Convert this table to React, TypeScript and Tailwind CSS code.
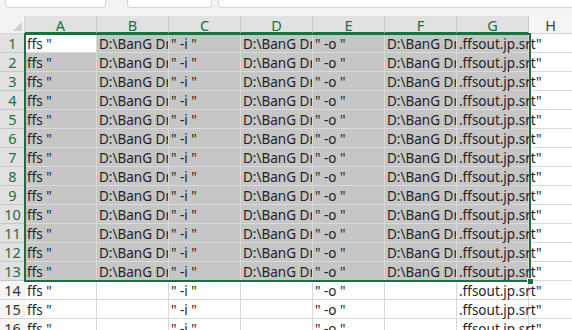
import React from 'react';

const COLS = ['A', 'B', 'C', 'D', 'E', 'F', 'G', 'H'];
const PATH = 'D:\\BanG Dream\\MyGO\\ep01';

type Row = { a: string; b: string; c: string; d: string; e: string; f: string; g: string };

const fullRow: Row = {
  a: 'ffs "',
  b: PATH,
  c: '" -i "',
  d: PATH,
  e: '" -o "',
  f: PATH,
  g: '.ffsout.jp.srt"',
};

const partRow: Row = { ...fullRow, b: '', d: '', f: '' };

const rows: Row[] = [
  ...Array.from({ length: 13 }, () => fullRow),
  ...Array.from({ length: 3 }, () => partRow),
];

function Cell({ text, selected, active, overflow }: { text: string; selected: boolean; active?: boolean; overflow?: boolean }) {
  const bg = active ? 'bg-white' : selected ? 'bg-[#c6c6c6]' : 'bg-white';
  const line = selected ? 'border-[#dadada]' : 'border-[#d9d9d9]';
  return (
    <div
      className={`h-[19px] border-r border-b ${line} ${bg} pl-[2px] pt-[1px] whitespace-nowrap text-[13.5px] leading-[18px] text-[#1f1f1f] ${
        overflow ? 'overflow-visible relative z-10' : 'overflow-hidden'
      }`}
    >
      {text}
    </div>
  );
}

export default function App() {
  return (
    <div className="w-[572px] h-[330px] overflow-hidden bg-white" style={{ fontFamily: '"Noto Sans", "Open Sans", sans-serif' }}>
      {/* formula bar strip */}
      <div className="h-[16px] bg-[#f3f3f3] flex items-start">
        <div className="ml-[5px] w-[101px] h-[8px] bg-white border border-t-0 border-[#d6d6d6] rounded-b-[4px]" />
        <div className="ml-[21px] w-[85px] h-[8px] bg-white border border-t-0 border-[#d6d6d6] rounded-b-[4px]" />
        <div className="ml-[6px] flex-1 h-[8px] bg-white border border-t-0 border-r-0 border-[#d6d6d6] rounded-bl-[4px]" />
      </div>

      <div className="relative">
        <div className="grid grid-cols-[25px_72px_72px_72px_72px_72px_72px_72px_1fr]">
          {/* header row */}
          <div className="h-[18px] bg-[#f3f3f3] border-r border-b border-[#d4d4d4] relative">
            <div className="absolute right-[2px] bottom-[2px] w-0 h-0 border-l-[9px] border-l-transparent border-b-[9px] border-b-[#d0d0d0]" />
          </div>
          {COLS.map((c, i) => {
            const sel = i < 7;
            return (
              <div
                key={c}
                className={`h-[18px] flex items-center justify-center pt-[2px] text-[14.5px] leading-none ${
                  sel
                    ? 'bg-[#e1e1e1] text-[#1e6e42] border-r border-[#c8c8c8] border-b-2 border-b-[#1e6e42]'
                    : 'bg-[#f5f5f5] text-[#444] border-b border-[#d4d4d4]'
                }`}
              >
                {c}
              </div>
            );
          })}

          {rows.map((r, i) => {
            const sel = i < 13;
            return (
              <React.Fragment key={i}>
                <div
                  className={`h-[19px] flex items-center justify-center pt-[1px] text-[14.5px] border-b ${
                    sel
                      ? 'bg-[#e1e1e1] text-[#1e6e42] border-[#c8c8c8]'
                      : 'bg-[#f5f5f5] text-[#333] border-[#d4d4d4]'
                  }`}
                >
                  {i + 1}
                </div>
                <Cell text={r.a} selected={sel} active={i === 0} />
                <Cell text={r.b} selected={sel} />
                <Cell text={r.c} selected={sel} />
                <Cell text={r.d} selected={sel} />
                <Cell text={r.e} selected={sel} />
                <Cell text={r.f} selected={sel} />
                <Cell text={r.g} selected={sel} overflow />
                <div className="h-[19px] border-b border-[#d9d9d9]" />
              </React.Fragment>
            );
          })}
        </div>

        {/* selection outline */}
        <div className="absolute left-[24px] top-[17px] w-[507px] h-[249px] border-2 border-[#1e6e42] z-20 pointer-events-none" />
        <div className="absolute left-[527px] top-[262px] w-[7px] h-[7px] bg-[#1e6e42] border border-white z-30" />
      </div>
    </div>
  );
}
